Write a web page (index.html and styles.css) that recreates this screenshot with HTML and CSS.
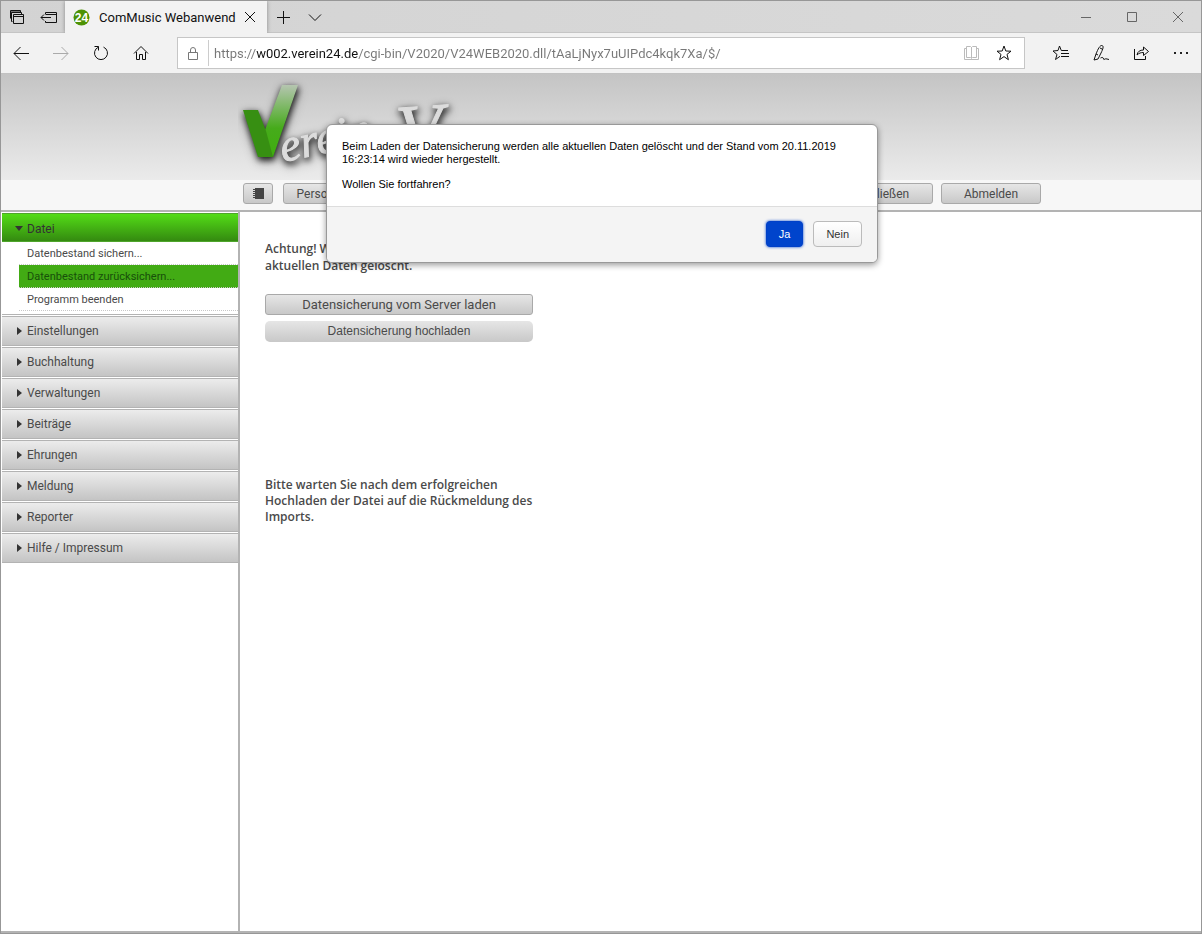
FILE: index.html
```html
<!DOCTYPE html>
<html lang="de">
<head>
  <meta charset="UTF-8" />
  <meta name="viewport" content="width=device-width, initial-scale=1.0" />
  <title>ComMusic Webanwendung</title>
  <link rel="stylesheet" href="styles.css">
</head>
<body>
  <div class="window">
    <div class="tabbar">
      <button class="tab-tool" aria-label="Tabs"><svg width="16" height="16" viewBox="0 0 16 16"><path d="M1.500 9.500v-8h10v2M3.500 12.500h-1v-9h10v1.500M4.500 5.500h10v9h-10zM4.500 7.500h10M1.500 3h10"/></svg></button>
      <button class="tab-tool" aria-label="Tabs beiseitelegen"><svg width="18" height="16" viewBox="0 0 18 16"><path d="M5.500 5V3.500h11v10h-11V12M5.500 5.500h11M1 8.500h10M4 5.500l-3 3 3 3"/></svg></button>
      <div class="tab">
        <svg width="17" height="17" viewBox="0 0 17 17"><circle class="badge" cx="8.500" cy="8.500" r="8"/><text class="badge-text" x="8.500" y="13" text-anchor="middle">24</text></svg>
        <span class="tab-title">ComMusic Webanwend</span>
        <button class="tab-close" aria-label="Tab schließen"><svg width="12" height="12" viewBox="0 0 12 12"><path d="M1 1l10 10M11 1L1 11"/></svg></button>
      </div>
      <button class="tab-tool" aria-label="Neuer Tab"><svg width="14" height="14" viewBox="0 0 14 14"><path d="M7.500 1v13M1 7.500h13"/></svg></button>
      <button class="tab-tool" aria-label="Tabvorschau"><svg width="14" height="14" viewBox="0 0 14 14"><path d="M1 4.500l6 6 6-6"/></svg></button>
      <div class="window-buttons">
        <button aria-label="Minimieren"><svg width="12" height="12" viewBox="0 0 12 12"><path d="M1 6.500h10"/></svg></button>
        <button aria-label="Maximieren"><svg width="12" height="12" viewBox="0 0 12 12"><path d="M1.500 1.500h9v9h-9z"/></svg></button>
        <button aria-label="Schließen"><svg width="12" height="12" viewBox="0 0 12 12"><path d="M1 1l10 10M11 1L1 11"/></svg></button>
      </div>
    </div>

    <div class="navbar">
      <div class="nav-group">
        <button aria-label="Zurück"><svg width="16" height="16" viewBox="0 0 16 16"><path d="M16 8.500H1M7.500 2L1 8.500 7.500 15"/></svg></button>
        <button class="disabled" aria-label="Vorwärts"><svg width="16" height="16" viewBox="0 0 16 16"><path d="M0 8.500h15M8.500 2L15 8.500 8.500 15"/></svg></button>
        <button aria-label="Aktualisieren"><svg width="16" height="16" viewBox="0 0 16 16"><path d="M5.500 2.100a6.500 6.500 0 1 0 5 0M1.500 1.500h4v4"/></svg></button>
        <button aria-label="Startseite"><svg width="16" height="16" viewBox="0 0 16 16"><path d="M1 8.500l7-7 7 7M3.500 7v7.500h3v-5h3v5h3V7"/></svg></button>
      </div>
      <div class="address">
        <svg class="lock" width="12" height="14" viewBox="0 0 12 14"><path d="M1.500 6.500h9v7h-9zM3.500 6.500V4a2.500 2.500 0 0 1 5 0v2.500"/></svg>
        <input class="url" type="text" aria-label="Adresse" value="https://w002.verein24.de/cgi-bin/V2020/V24WEB2020.dll/tAaLjNyx7uUIPdc4kqk7Xa/$/">
        <button class="reader" aria-label="Leseansicht"><svg width="16" height="16" viewBox="0 0 16 16"><path d="M2.500 1.500h4l1 1 1-1h4v11h-4l-1 1-1-1h-4zM7.500 2v11M2 3.500H.5v11h14v-11H13"/></svg></button>
        <button aria-label="Favorit"><svg width="16" height="16" viewBox="0 0 16 16"><path d="M8 1l1.800 5 5.200.2-4 3.200 1.400 5.300L8 11.600l-4.400 3.100 1.400-5.300L1 6.200l5.200-.2z"/></svg></button>
      </div>
      <div class="nav-group">
        <button aria-label="Hub"><svg width="16" height="16" viewBox="0 0 16 16"><path d="M15 5.500H8.300L6.500 1 5 5.500 0 6l4 3.500-1.500 5L7 11.300M8 8.500h8M8 11.500h8"/></svg></button>
        <button aria-label="Notizen"><svg width="16" height="16" viewBox="0 0 16 16"><path d="M1 15l2-6C5 4 7 0 9 .5s1 3.500-1 7.500l-3 6-4 1M3 9l2 1M7 3l2 1M7.500 13c2-1 3-.5 3 1s2-1 3.500 0l2 .5"/></svg></button>
        <button aria-label="Teilen"><svg width="17" height="16" viewBox="0 0 17 16"><path d="M1.500 4v10.500h11V11M4 10c.5-3.500 3-5 6.500-5V2l5 4.500-5 4v-3C8 7.500 6 8 4 10z"/></svg></button>
        <button aria-label="Mehr"><svg width="16" height="16" viewBox="0 0 16 16"><path class="dots" d="M1 7h2v2H1zM7 7h2v2H7zM13 7h2v2h-2z"/></svg></button>
      </div>
    </div>

    <div class="page">
      <header class="banner">
        <svg class="logo" width="240" height="106" viewBox="0 0 240 106" role="img" aria-label="Verein">
          <defs>
            <linearGradient id="tick" x1="0" y1="0" x2="0" y2="1">
              <stop offset="0" stop-color="#b5c5b0"/>
              <stop offset=".6" stop-color="#46ab1b"/>
              <stop offset="1" stop-color="#3fad0f"/>
            </linearGradient>
          </defs>
          <g class="logo-shadow">
            <path fill="url(#tick)" d="M44 11h16L35 83H20l7-27z"/>
            <path fill="#378f12" d="M5 36h15l8 21 7 26H20z"/>
            <text class="script" transform="translate(45 88) rotate(-12)">erein</text>
            <text class="script script-big" transform="translate(160 84) rotate(-4)">V</text>
          </g>
        </svg>
      </header>

      <nav class="toolbar">
        <button class="tool-button icon" aria-label="Adressbuch"><svg width="11" height="11" viewBox="0 0 11 11"><path class="book" d="M2 0h9v11H2z"/><path class="rings" d="M0 1.500h3M0 3.500h3M0 5.500h3M0 7.500h3M0 9.500h3"/></svg></button>
        <button class="tool-button">Personenliste</button>
        <button class="tool-button push">Schließen</button>
        <button class="tool-button">Abmelden</button>
      </nav>

      <div class="content">
        <nav class="sidebar">
          <button class="menu-head open">Datei</button>
          <div class="submenu">
            <a href="#">Datenbestand sichern...</a>
            <a class="active" href="#">Datenbestand zurücksichern...</a>
            <a href="#">Programm beenden</a>
          </div>
          <button class="menu-head">Einstellungen</button>
          <button class="menu-head">Buchhaltung</button>
          <button class="menu-head">Verwaltungen</button>
          <button class="menu-head">Beiträge</button>
          <button class="menu-head">Ehrungen</button>
          <button class="menu-head">Meldung</button>
          <button class="menu-head">Reporter</button>
          <button class="menu-head">Hilfe / Impressum</button>
        </nav>

        <main class="main">
          <p class="warning">Achtung! Weiter werden dabei alle Ihre aktuellen Daten gelöscht.</p>
          <button class="load-button">Datensicherung vom Server laden</button>
          <button class="load-button upload">Datensicherung hochladen</button>
          <p class="note">Bitte warten Sie nach dem erfolgreichen Hochladen der Datei auf die Rückmeldung des Imports.</p>
        </main>
      </div>
    </div>

    <div class="dialog" role="dialog" aria-modal="true">
      <div class="dialog-text">
        <p>Beim Laden der Datensicherung werden alle aktuellen Daten gelöscht und der Stand vom 20.11.2019 16:23:14 wird wieder hergestellt.</p>
        <p>Wollen Sie fortfahren?</p>
      </div>
      <div class="dialog-buttons">
        <button class="primary">Ja</button>
        <button>Nein</button>
      </div>
    </div>
  </div>
</body>
</html>
```
FILE: styles.css
```css
:root {
  --line: #b3b3b3;
  --text: #4a4a4a;
  --green: #42ab14;
  --ui-font: Roboto, "Noto Sans", sans-serif;
}

*,
*::before {
  box-sizing: border-box;
}

body {
  margin: 0;
  font-family: var(--ui-font);
  font-size: 12px;
  color: var(--text);
}

button {
  margin: 0;
  padding: 0;
  border: none;
  background: none;
  font-family: inherit;
  font-size: inherit;
  color: inherit;
}

p {
  margin: 0;
}

svg {
  display: block;
  fill: none;
  stroke: #111;
}

.window {
  position: relative;
  display: flex;
  flex-direction: column;
  min-height: 100vh;
  border: 1px solid #979797;
}

/* browser frame */
.tabbar {
  display: flex;
  height: 32px;
  background: linear-gradient(to right, #d3d3d3, #dadada);
  box-shadow: inset 0 -1px #c5c5c5;
}

.tab-tool {
  width: 32px;
  display: flex;
  align-items: center;
  justify-content: center;
}

.tab {
  display: flex;
  align-items: center;
  width: 202px;
  padding: 0 11px 0 8px;
  background: #f2f2f2;
  box-shadow: 0 0 4px #888;
  clip-path: inset(0 -5px 0 -5px);
}

.tab-title {
  flex: 1;
  margin-left: 9px;
  font-size: 13px;
  color: #111;
  white-space: nowrap;
}

.badge {
  fill: #4d9204;
  stroke: none;
}

.badge-text {
  font: bold 12px "Liberation Sans", sans-serif;
  fill: #fff;
  stroke: none;
}

.window-buttons {
  display: flex;
  margin-left: auto;
}

.window-buttons button {
  width: 46px;
  display: flex;
  align-items: center;
  justify-content: center;
}

.window-buttons svg {
  stroke: #666;
}

.navbar {
  display: flex;
  align-items: center;
  height: 41px;
  background: #f2f2f2;
  border-bottom: 1px solid #c2c2c2;
}

.nav-group {
  display: flex;
}

.nav-group button {
  width: 40px;
  display: flex;
  justify-content: center;
}

.nav-group .disabled svg {
  stroke: #aaa;
}

.dots {
  fill: #222;
  stroke: none;
}

.address {
  flex: 1;
  display: flex;
  align-items: center;
  gap: 16px;
  height: 32px;
  margin: 0 16px;
  padding: 0 12px 0 9px;
  background: #fff;
  border: 1px solid #c6c6c6;
}

.address .lock {
  stroke: #777;
}

.address .reader svg {
  stroke: #bbb;
}

/* the host part of the address is darker than the rest */
.url {
  flex: 1;
  min-width: 0;
  height: 26px;
  margin-left: -7px;
  padding: 0 0 0 5px;
  border: none;
  border-left: 1px solid #ccc;
  outline: none;
  font-family: var(--ui-font);
  font-size: 13px;
  color: transparent;
  background: linear-gradient(to right, #777 47px, #111 47px, #111 149px, #777 149px);
  background-clip: text;
  -webkit-background-clip: text;
}

/* page */
.page {
  flex: 1;
  display: flex;
  flex-direction: column;
}

.banner {
  height: 106px;
  padding-left: 237px;
  background: linear-gradient(to bottom, #c4c4c4, #ebebeb);
}

.logo {
  stroke: none;
}

.logo-shadow {
  filter: drop-shadow(1px 3px 3px rgba(0, 0, 0, 0.8)) drop-shadow(0 2px 4px rgba(0, 0, 0, 0.4));
}

.script {
  font: italic 46px "Liberation Serif", serif;
  fill: #dcdcdc;
  stroke: #dcdcdc;
}

.script-big {
  font-size: 76px;
}

.toolbar {
  display: flex;
  align-items: flex-start;
  gap: 8px;
  height: 32px;
  padding: 3px 160px 0 242px;
  background: #f7f7f7;
  border-bottom: 2px solid var(--line);
}

.tool-button {
  display: flex;
  align-items: center;
  justify-content: center;
  width: 100px;
  height: 21px;
  border: 1px solid #a9a9a9;
  border-radius: 3px;
  background: linear-gradient(to bottom, #e6e6e6, #c8c8c8);
}

.tool-button.icon {
  width: 30px;
  margin-right: 2px;
}

.tool-button.push {
  margin-left: auto;
}

.book {
  fill: #444;
  stroke: none;
}

.rings {
  stroke: #444;
  stroke-dasharray: 2 1;
}

.content {
  flex: 1;
  display: flex;
  border-bottom: 2px solid var(--line);
}

.sidebar {
  display: flex;
  flex-direction: column;
  gap: 1px;
  width: 239px;
  padding: 1px 0 0 1px;
  border-right: 2px solid var(--line);
}

.menu-head {
  display: flex;
  align-items: center;
  height: 30px;
  padding-left: 15px;
  border: 1px solid var(--line);
  border-left: none;
  border-right: none;
  background: linear-gradient(to bottom, #ececec, #c4c4c4);
}

.menu-head::before {
  content: "";
  width: 5px;
  margin-right: 5px;
  border: 4px solid transparent;
  border-left: 5px solid #333;
  border-right: none;
}

.menu-head.open {
  height: 29px;
  padding-top: 2px;
  border-color: #4fa52c;
  background: linear-gradient(to bottom, #53dc17, #348a10);
  color: #333;
}

.menu-head.open::before {
  width: 8px;
  margin-right: 4px;
  margin-left: -2px;
  border: 4px solid transparent;
  border-top: 5px solid #333;
  border-bottom: none;
}

.submenu {
  margin-top: -1px;
  padding: 0 0 3px 17px;
  border-bottom: 1px solid var(--line);
}

.submenu a {
  display: block;
  height: 23px;
  padding-left: 8px;
  border-bottom: 1px dotted #c8c8c8;
  font-size: 11px;
  line-height: 24px;
  color: var(--text);
  text-decoration: none;
}

.submenu .active {
  background: var(--green);
  color: #17500a;
}

.main {
  flex: 1;
  display: flex;
  flex-direction: column;
  align-items: flex-start;
  padding: 28px 25px;
}

.warning,
.note {
  width: 280px;
  font-family: "Open Sans", "Noto Sans", sans-serif;
  font-size: 12px;
  font-weight: 600;
  line-height: 17px;
}

.load-button {
  width: 268px;
  height: 21px;
  margin-top: 20px;
  border: 1px solid #a9a9a9;
  border-radius: 3px;
  background: linear-gradient(to bottom, #e6e6e6, #c8c8c8);
  font-size: 13px;
  line-height: 19px;
}

.load-button.upload {
  margin-top: 6px;
  border: none;
  border-radius: 5px;
  font-family: "Liberation Sans", sans-serif;
  font-size: 12px;
}

.note {
  margin-top: 135px;
  line-height: 16px;
}

/* confirm dialog */
.dialog {
  position: absolute;
  top: 123px;
  left: 50%;
  width: 552px;
  margin-left: -275px;
  border: 1px solid #999;
  border-radius: 6px;
  background: #fff;
  box-shadow: 0 2px 6px rgba(0, 0, 0, 0.4);
  overflow: hidden;
  font-family: "Liberation Sans", Arial, sans-serif;
  font-size: 11px;
  color: #000;
}

.dialog-text {
  display: flex;
  flex-direction: column;
  gap: 12px;
  padding: 15px;
  line-height: 13px;
}

.dialog-buttons {
  display: flex;
  justify-content: flex-end;
  gap: 10px;
  padding: 14px 15px 15px;
  background: #f4f4f4;
  border-top: 1px solid #ddd;
}

.dialog-buttons button {
  height: 26px;
  padding: 0 12px;
  border: 1px solid #bbb;
  border-radius: 4px;
  background: linear-gradient(to bottom, #fff, #efefef);
  color: #333;
}

.dialog-buttons .primary {
  border-color: #0040c8;
  background: #0044cc;
  box-shadow: 0 0 3px #0044cc;
  color: #fff;
}
```
